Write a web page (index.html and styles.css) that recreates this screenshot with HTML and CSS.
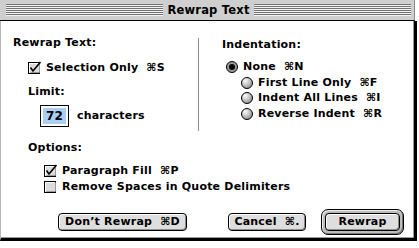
FILE: index.html
```html
<!DOCTYPE html>
<html>
<head>
<meta charset="utf-8">
<link rel="stylesheet" href="styles.css">
</head>
<body>
<div class="window">
  <div class="titlebar">
    <span class="stripes"></span>
    <span class="title">Rewrap Text</span>
    <span class="stripes"></span>
  </div>
  <div class="content">
    <div class="columns">
      <div class="left">
        <div class="heading top">Rewrap Text:</div>
        <div class="row cb-row sel-row">
          <svg class="cb" viewBox="0 0 14 14" width="14" height="14"><rect x="0.5" y="1.5" width="11" height="11" fill="#dcdcdc" stroke="#000"/><path d="M1.5 2.5h9M1.5 2.5v9" stroke="#fff"/><path d="M2.5 11.5h9M11.5 2.5v9" stroke="#9a9a9a"/><path d="M2.5 6.5 L5 10 L12.5 1" fill="none" stroke="#000" stroke-width="1.6"/></svg>
          <span class="lbl">Selection Only  ⌘S</span>
        </div>
        <div class="heading sub limit">Limit:</div>
        <div class="row field-row">
          <span class="field"><span class="hilite">72</span></span>
          <span class="lbl">characters</span>
        </div>
      </div>
      <div class="divider"></div>
      <div class="right">
        <div class="heading">Indentation:</div>
        <div class="row radio-row first">
          <svg class="rb" viewBox="0 0 12 12" width="12" height="12"><circle cx="6" cy="6" r="5.5" fill="#9a9a9a" stroke="#000"/><circle cx="6" cy="6" r="3" fill="#000"/></svg>
          <span class="lbl">None  ⌘N</span>
        </div>
        <div class="row radio-row nested">
          <svg class="rb" viewBox="0 0 12 12" width="12" height="12"><defs><radialGradient id="g1" cx="0.35" cy="0.3" r="0.75"><stop offset="0" stop-color="#fff"/><stop offset="1" stop-color="#8c8c8c"/></radialGradient></defs><circle cx="6" cy="6" r="5.5" fill="url(#g1)" stroke="#000"/></svg>
          <span class="lbl">First Line Only  ⌘F</span>
        </div>
        <div class="row radio-row nested">
          <svg class="rb" viewBox="0 0 12 12" width="12" height="12"><circle cx="6" cy="6" r="5.5" fill="url(#g1)" stroke="#000"/></svg>
          <span class="lbl">Indent All Lines  ⌘I</span>
        </div>
        <div class="row radio-row nested">
          <svg class="rb" viewBox="0 0 12 12" width="12" height="12"><circle cx="6" cy="6" r="5.5" fill="url(#g1)" stroke="#000"/></svg>
          <span class="lbl">Reverse Indent  ⌘R</span>
        </div>
      </div>
    </div>
    <div class="heading sub">Options:</div>
    <div class="row cb-row opt-row first-opt">
      <svg class="cb" viewBox="0 0 14 14" width="14" height="14"><rect x="0.5" y="1.5" width="11" height="11" fill="#dcdcdc" stroke="#000"/><path d="M1.5 2.5h9M1.5 2.5v9" stroke="#fff"/><path d="M2.5 11.5h9M11.5 2.5v9" stroke="#9a9a9a"/><path d="M2.5 6.5 L5 10 L12.5 1" fill="none" stroke="#000" stroke-width="1.6"/></svg>
      <span class="lbl">Paragraph Fill  ⌘P</span>
    </div>
    <div class="row cb-row opt-row">
      <svg class="cb" viewBox="0 0 14 14" width="14" height="14"><rect x="0.5" y="1.5" width="11" height="11" fill="#dcdcdc" stroke="#000"/><path d="M1.5 2.5h9M1.5 2.5v9" stroke="#fff"/><path d="M2.5 11.5h9M11.5 2.5v9" stroke="#9a9a9a"/></svg>
      <span class="lbl">Remove Spaces in Quote Delimiters</span>
    </div>
    <div class="buttons">
      <div class="btn dont">Don’t Rewrap  ⌘D</div>
      <div class="btn cancel">Cancel  ⌘.</div>
      <div class="default-ring"><div class="btn ok">Rewrap</div></div>
    </div>
  </div>
</div>
</body>
</html>
```

FILE: styles.css
```css
* { box-sizing: border-box; }
html, body { margin: 0; padding: 0; background: #fff; }
body {
  font-family: "DejaVu Sans", "Liberation Sans", sans-serif;
  font-weight: bold;
  font-size: 11px;
  letter-spacing: 0.2px;
  color: #000;
}
.window { width: 417px; height: 241px; display: flex; flex-direction: column; }
.titlebar {
  height: 21px;
  margin-right: 2px;
  background: #cfcfcf;
  border-bottom: 1px solid #000;
  border-right: 1px solid #8a8a8a;
  display: flex;
  align-items: center;
  padding: 0 3px 0 6px;
}
.stripes {
  flex: 1;
  height: 12px;
  background: repeating-linear-gradient(to bottom, #747474 0 1px, #f2f2f2 1px 2px);
}
.title { padding: 0 4px; line-height: 16px; font-size: 11.5px; }
.content {
  flex: 1;
  background: #fff;
  border-left: 1px solid #b5b5b5;
  border-right: 3px solid #000;
  border-bottom: 3px solid #000;
  box-shadow: inset -1px -1px 0 #9a9a9a;
  padding: 13px 0 0 12px;
}
.columns { display: flex; height: 106px; }
.left { width: 185px; }
.heading { line-height: 16px; white-space: pre; }
.heading.top { margin-top: 1px; }
.heading.sub { padding-left: 15px; }
.heading.limit { margin-top: 8px; }
.row { display: flex; align-items: center; white-space: pre; }
.lbl { line-height: 16px; }
.cb-row { height: 16px; }
.cb { flex: none; margin-right: 4px; margin-top: -1px; }
.sel-row { margin-top: 9px; padding-left: 15px; }
.field-row { margin-top: 5px; height: 22px; padding-left: 27px; }
.field {
  width: 29px;
  height: 22px;
  border: 1px solid #000;
  background: #fff;
  padding: 2px;
  display: flex;
  margin-right: 8px;
}
.hilite {
  flex: 1;
  background: #a9cff5;
  line-height: 16px;
  text-align: center;
  font-size: 12px;
}
.divider { width: 1px; background: #8c8c8c; margin-top: 4px; height: 93px; }
.right { padding-left: 23px; }
.right .heading { margin-top: 3px; }
.radio-row { height: 15.5px; }
.radio-row.first { margin-top: 6px; padding-left: 4px; height: 16px; }
.radio-row.nested { padding-left: 19px; }
.rb { flex: none; margin-right: 5px; }
.opt-row { padding-left: 31px; }
.first-opt { margin-top: 7px; }
.buttons { display: flex; align-items: center; margin-top: 14px; height: 26px; }
.btn {
  height: 18px;
  border: 1px solid #000;
  border-radius: 4px;
  background: #dedede;
  box-shadow: inset 1px 1px 0 #fff, inset -1px -1px 0 #8e8e8e;
  display: flex;
  align-items: center;
  justify-content: center;
  white-space: pre;
  line-height: 16px;
}
.dont { width: 129px; margin-left: 45px; }
.cancel { width: 78px; margin-left: 41px; }
.default-ring {
  margin-left: 15px;
  width: 83px;
  height: 26px;
  border: 1px solid #000;
  border-radius: 7px;
  background: #bdbdbd;
  box-shadow: inset 1px 1px 0 #eee, inset -1px -1px 0 #777;
  padding: 3px;
}
.ok { width: 100%; }
```
